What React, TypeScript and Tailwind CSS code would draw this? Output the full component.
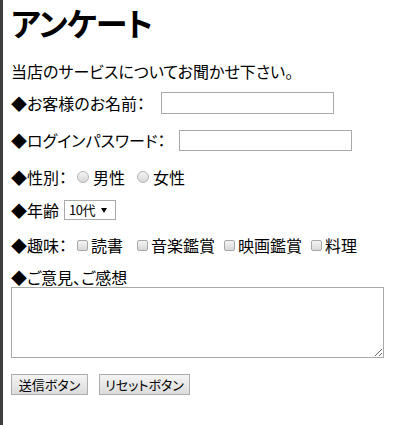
import { useState } from "react";

export default function App() {
  const [age, setAge] = useState("10");

  const radioCls =
    "appearance-none w-[12px] h-[12px] rounded-full border border-[#b4b4b4] bg-gradient-to-b from-[#f4f4f4] to-[#d8d8d8] mr-[4px] shrink-0";
  const checkCls =
    "appearance-none w-[11px] h-[11px] rounded-[2px] border border-[#a8a8a8] bg-gradient-to-b from-[#f4f4f4] to-[#d8d8d8] mr-[3px] shrink-0";
  const btnCls =
    "h-[21px] border border-[#adadad] bg-gradient-to-b from-[#f4f4f4] to-[#dcdcdc] text-[13px] leading-[19px] text-black text-center";

  return (
    <div
      className="min-h-screen flex bg-white text-black [font-feature-settings:'palt']"
      style={{ fontFamily: '"Noto Sans CJK JP", "Noto Sans", sans-serif' }}
    >
      {/* //? left bar */}
      <div className="w-[3px] bg-[#3e3e3e] shrink-0" />

      <form className="flex-1 px-[8px] text-[16px]">
        <h1 className="text-[32px] font-bold leading-[44px] tracking-[-1px]">アンケート</h1>

        <p className="mt-[17px] leading-[20px]">当店のサービスについてお聞かせ下さい。</p>

        <div className="mt-[11px] h-[22px] flex items-center">
          <span className="w-[150px] shrink-0">◆お客様のお名前：</span>
          <input type="text" className="w-[173px] h-[22px] border border-[#a9a9a9] px-1 outline-none" />
        </div>

        <div className="mt-[15px] h-[22px] flex items-center">
          <span className="w-[168px] shrink-0">◆ログインパスワード：</span>
          <input type="password" className="w-[173px] h-[21px] border border-[#a9a9a9] px-1 outline-none" />
        </div>

        <div className="mt-[15px] h-[22px] flex items-center">
          <span className="w-[66px] shrink-0">◆性別：</span>
          <label className="flex items-center mr-[12px]">
            <input type="radio" name="sex" className={radioCls} />
            男性
          </label>
          <label className="flex items-center">
            <input type="radio" name="sex" className={radioCls} />
            女性
          </label>
        </div>

        <div className="mt-[11px] h-[22px] flex items-center">
          <span className="w-[53px] shrink-0">◆年齢</span>
          <div className="relative">
            <select
              value={age}
              onChange={(e) => setAge(e.target.value)}
              className="block appearance-none w-[52px] h-[20px] border border-[#a9a9a9] bg-white pl-[4px] text-[13px] leading-[18px] tracking-[-0.5px] outline-none"
            >
              <option value="10">10代</option>
              <option value="20">20代</option>
              <option value="30">30代</option>
            </select>
            {/* arrow */}
            <span className="absolute right-[9px] top-[8px] w-0 h-0 border-l-[3.5px] border-r-[3.5px] border-t-[5px] border-l-transparent border-r-transparent border-t-black pointer-events-none" />
          </div>
        </div>

        <div className="mt-[13px] h-[22px] flex items-center">
          <span className="w-[66px] shrink-0">◆趣味：</span>
          <label className="flex items-center mr-[14px]">
            <input type="checkbox" className={checkCls} />
            読書
          </label>
          <label className="flex items-center mr-[9px]">
            <input type="checkbox" className={checkCls} />
            音楽鑑賞
          </label>
          <label className="flex items-center mr-[9px]">
            <input type="checkbox" className={checkCls} />
            映画鑑賞
          </label>
          <label className="flex items-center">
            <input type="checkbox" className={checkCls} />
            料理
          </label>
        </div>

        <p className="mt-[12px] h-[19px] leading-[19px]">◆ご意見、ご感想</p>
        <textarea className="block w-[373px] h-[71px] border border-[#a9a9a9] outline-none resize" />

        <div className="mt-[16px] flex gap-[11px]">
          <button type="submit" className={`${btnCls} w-[77px]`}>
            送信ボタン
          </button>
          <button type="reset" className={`${btnCls} w-[91px]`}>
            リセットボタン
          </button>
        </div>
      </form>
    </div>
  );
}
